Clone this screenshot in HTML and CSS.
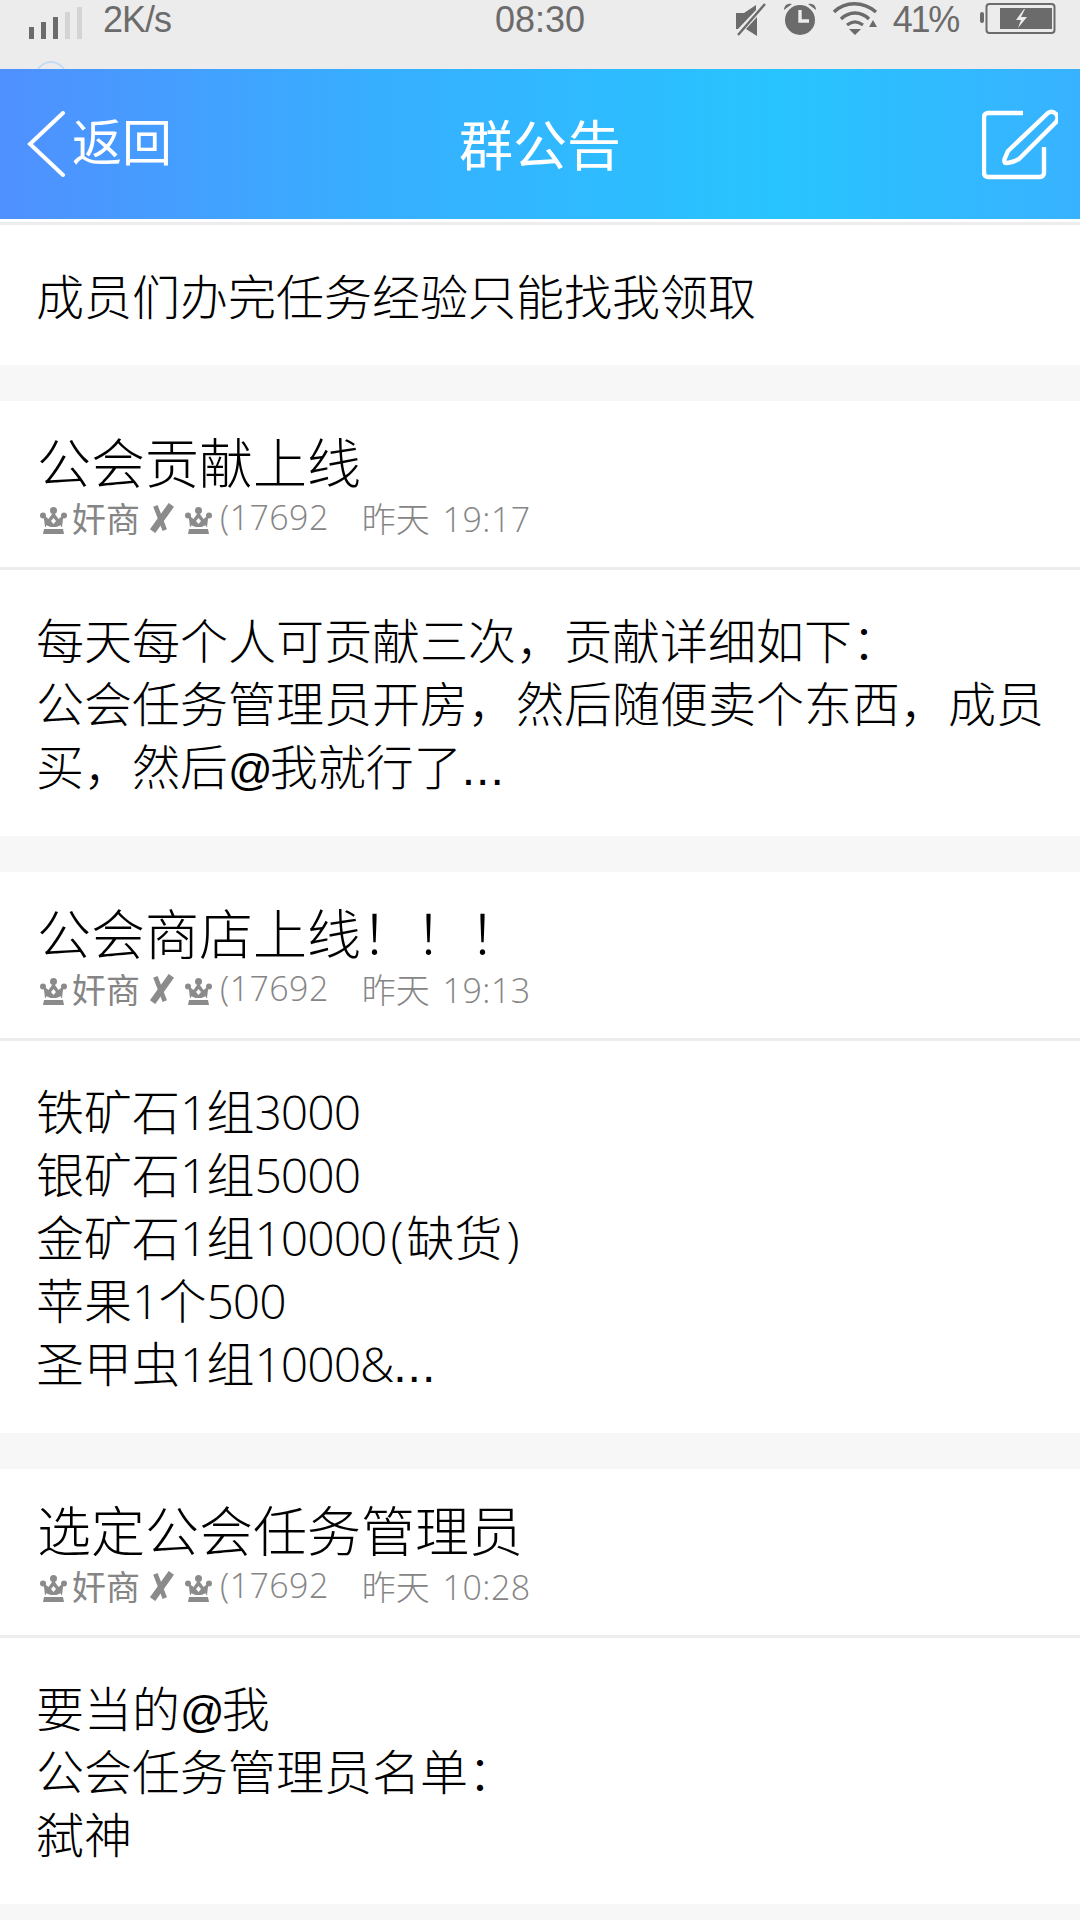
FILE: index.html
```html
<!DOCTYPE html>
<html>
<head>
    <title>群公告</title>
    <link rel="stylesheet" href="styles.css">
</head>
<body>

    <svg class="defs" width="0" height="0">
        <symbol id="crown" viewBox="0 0 27 27">
            <circle cx="13.500" cy="3.500" r="3.500" fill="#8b8b8b"/>
            <circle cx="3" cy="8.500" r="3" fill="#8b8b8b"/>
            <circle cx="24" cy="8.500" r="3" fill="#8b8b8b"/>
            <path d="M13.500 5l5 7 5-4-1.500 12H5L3.500 8l5 4z" fill="#8b8b8b"/>
            <path d="M4 22h19l1 5H3z" fill="#8b8b8b"/>
            <path d="M6 19c5 3 10 3 15 0" stroke="#fff" stroke-width="1.500" fill="none"/>
            <path d="M13.500 11l2.500 3-2.500 3-2.500-3z" fill="#fff"/>
        </symbol>
        <symbol id="cross" viewBox="0 0 27 32">
            <path d="M24 2L4 30" stroke="#8b8b8b" stroke-width="7" fill="none"/>
            <path d="M7 3l10 26" stroke="#8b8b8b" stroke-width="5" fill="none"/>
        </symbol>
    </svg>

    <div class="statusbar">
        <span class="peek"></span>
        <div class="status-left">
            <div class="signal">
                <span class="bar b1"></span>
                <span class="bar b2"></span>
                <span class="bar b3"></span>
                <span class="bar b4 off"></span>
                <span class="bar b5 off"></span>
            </div>
            <span class="speed">2K/s</span>
        </div>
        <div class="clock">08:30</div>
        <div class="status-right">
            <svg class="ic-mute" width="32" height="34" viewBox="0 0 32 34">
                <path d="M1 11h8L21 3v5L3 27H1z M22 15v19l-11-7z" fill="#6b6b6b"/>
                <path d="M3 33L30 2" stroke="#6b6b6b" stroke-width="2.4" fill="none"/>
            </svg>
            <svg class="ic-alarm" width="34" height="34" viewBox="0 0 34 34">
                <circle cx="17" cy="19" r="15" fill="#6b6b6b"/>
                <path d="M1 9a6 6 0 0 1 8-6z M33 9a6 6 0 0 0-8-6z" fill="#6b6b6b"/>
                <path d="M17 9v11h9" stroke="#ececec" stroke-width="3.4" fill="none"/>
            </svg>
            <svg class="ic-wifi" width="46" height="34" viewBox="0 0 46 34">
                <path d="M1 11C12 0 30 0 43 11" stroke="#6b6b6b" stroke-width="3.4" fill="none"/>
                <path d="M8 18C16 10 28 10 36 18" stroke="#6b6b6b" stroke-width="3.4" fill="none"/>
                <path d="M14 24C19 20 25 20 30 24" stroke="#6b6b6b" stroke-width="3.2" fill="none"/>
                <path d="M16 28h12l-6 6z M40 19l4 7h-8z" fill="#6b6b6b"/>
            </svg>
            <span class="percent">41%</span>
            <svg class="ic-battery" width="76" height="34" viewBox="0 0 76 34">
                <rect x="0" y="12" width="4" height="11" rx="2" fill="#6b6b6b"/>
                <rect x="6.500" y="4" width="68" height="29" rx="3" stroke="#6b6b6b" stroke-width="2" fill="none"/>
                <rect x="20" y="8" width="52" height="21" fill="#6b6b6b"/>
                <path d="M44 9l-8 11h5l-3 8 9-11h-6l4-8z" fill="#ececec"/>
            </svg>
        </div>
    </div>

    <div class="header">
        <div class="back">
            <svg width="40" height="66" viewBox="0 0 40 66">
                <path d="M37 2L4 33l33 31" stroke="#fff" stroke-width="4" fill="none" stroke-linecap="round"/>
            </svg>
            <span>返回</span>
        </div>
        <div class="header-title">群公告</div>
        <svg class="edit" width="76" height="74" viewBox="0 0 76 74">
            <path d="M41 4H6a4 4 0 0 0-4 4v56a4 4 0 0 0 4 4h52a4 4 0 0 0 4-4V38" stroke="#fff" stroke-width="4.400" fill="none"/>
            <path d="M26 42l40-38c3-2 6-1 8 1s2 5 0 8L37 50c-4 2-9 4-13 4c-2 0-2-3-1-5z" stroke="#fff" stroke-width="4.400" fill="none"/>
        </svg>
    </div>

    <div class="rule-top"></div>
    <div class="body first">
        成员们办完任务经验只能找我领取
    </div>

    <div class="notice">
        <div class="head">
            <div class="title">公会贡献上线</div>
            <div class="meta">
                <svg class="crown"><use href="#crown"/></svg>
                <span class="name">奸商</span>
                <svg class="cross"><use href="#cross"/></svg>
                <svg class="crown"><use href="#crown"/></svg>
                <span class="uid">(17692</span>
                <span class="when">昨天 <span class="time">19:17</span></span>
            </div>
        </div>
        <div class="body">
            每天每个人可贡献三次，贡献详细如下：<br>
            公会任务管理员开房，然后随便卖个东西，成员<br>
            买，然后<span class="at">@</span>我就行了<span class="dots">...</span>
        </div>
    </div>

    <div class="notice">
        <div class="head">
            <div class="title">公会商店上线！！！</div>
            <div class="meta">
                <svg class="crown"><use href="#crown"/></svg>
                <span class="name">奸商</span>
                <svg class="cross"><use href="#cross"/></svg>
                <svg class="crown"><use href="#crown"/></svg>
                <span class="uid">(17692</span>
                <span class="when">昨天 <span class="time">19:13</span></span>
            </div>
        </div>
        <div class="body">
            铁矿石<span class="n">1</span>组<span class="n">3000</span><br>
            银矿石<span class="n">1</span>组<span class="n">5000</span><br>
            金矿石<span class="n">1</span>组<span class="n">10000</span><span class="n paren">(</span>缺货<span class="n paren">)</span><br>
            苹果<span class="n">1</span>个<span class="n">500</span><br>
            圣甲虫<span class="n">1</span>组<span class="n">1000&amp;</span><span class="dots">...</span>
        </div>
    </div>

    <div class="notice">
        <div class="head">
            <div class="title">选定公会任务管理员</div>
            <div class="meta">
                <svg class="crown"><use href="#crown"/></svg>
                <span class="name">奸商</span>
                <svg class="cross"><use href="#cross"/></svg>
                <svg class="crown"><use href="#crown"/></svg>
                <span class="uid">(17692</span>
                <span class="when">昨天 <span class="time">10:28</span></span>
            </div>
        </div>
        <div class="body">
            要当的<span class="at">@</span>我<br>
            公会任务管理员名单：<br>
            弑神
        </div>
    </div>

</body>
</html>
```

FILE: styles.css
```css
* {
    box-sizing: border-box;
}

html, body {
    margin: 0;
    padding: 0;
}

body {
    width: 1080px;
    height: 1920px;
    overflow: hidden;
    background: #f7f7f7;
    font-family: "Noto Sans CJK SC", sans-serif;
    color: #000;
}

.defs {
    position: absolute;
}

.statusbar {
    display: flex;
    align-items: flex-start;
    justify-content: space-between;
    height: 69px;
    padding: 0 24px 0 29px;
    background: #ececec;
    color: #6b6b6b;
    font-family: "Liberation Sans", sans-serif;
    font-size: 36px;
    position: relative;
    overflow: hidden;
}

/* top of the page scrolled under the header */
.peek {
    position: absolute;
    left: 35px;
    top: 61px;
    width: 32px;
    height: 32px;
    border: 2px solid #c4dcf3;
    border-radius: 50%;
}

.status-left {
    display: flex;
    align-items: center;
    height: 40px;
}

.speed {
    letter-spacing: -1px;
}

.signal {
    display: flex;
    align-items: flex-end;
    gap: 7px;
    height: 32px;
    margin-top: 6px;
    margin-right: 21px;
}

.bar {
    width: 5px;
    background: #6b6b6b;
}

.bar.off { background: #d4d4d4; }
.b1 { height: 12px; }
.b2 { height: 17px; }
.b3 { height: 22px; }
.b4 { height: 27px; }
.b5 { height: 32px; }

.clock {
    position: absolute;
    left: 0;
    right: 0;
    top: 0;
    height: 40px;
    line-height: 40px;
    text-align: center;
}

.status-right {
    display: flex;
    align-items: flex-start;
    height: 40px;
}

.ic-mute { margin-right: 16px; margin-top: 2px; }
.ic-alarm { margin-right: 16px; margin-top: 1px; }
.ic-wifi { margin-right: 14px; margin-top: 1px; }

.percent {
    line-height: 40px;
    margin-right: 22px;
    letter-spacing: -2.250px;
}

.header {
    display: flex;
    align-items: center;
    justify-content: space-between;
    position: relative;
    height: 150px;
    padding: 0 22px 0 26px;
    background: linear-gradient(90deg, #5090ff 0%, #37afff 35%, #28c4ff 72%, #38b2ff 100%);
    color: #fff;
}

.back {
    display: flex;
    align-items: center;
    font-size: 50px;
    gap: 6px;
}

.back span {
    margin-top: -10px;
}

.header-title {
    position: absolute;
    left: 0;
    right: 0;
    top: 34px;
    text-align: center;
    font-size: 54px;
}

.edit {
    margin-top: 4px;
}

.rule-top {
    height: 6px;
    background: #fff;
    border-bottom: 3px solid #ededed;
}

.notice {
    margin-top: 36px;
}

.head {
    height: 169px;
    padding: 30px 37px 0;
    background: #fff;
    border-bottom: 3px solid #ededed;
}

.title {
    font-family: "Lato", "Noto Sans CJK SC", sans-serif;
    font-weight: 300;
    font-size: 54px;
    line-height: 66px;
}

.meta {
    display: flex;
    align-items: center;
    height: 40px;
    font-size: 34px;
    color: #858585;
    font-family: "Open Sans", "Noto Sans CJK SC", sans-serif;
    font-weight: 300;
}

.crown {
    width: 27px;
    height: 27px;
    margin: 6px 0 0 3px;
}

.name {
    margin-left: 5px;
    font-weight: 400;
}

.cross {
    width: 27px;
    height: 30px;
    margin: 2px 7px 0 8px;
}

.uid {
    margin-left: 8px;
    letter-spacing: 0.400px;
}

.when {
    margin-left: 33px;
}

.time {
    margin-left: 4px;
    letter-spacing: 0.500px;
}

.body {
    padding: 39px 20px 38px 36px;
    background: #fff;
    font-family: "Lato", "Noto Sans CJK SC", sans-serif;
    font-weight: 300;
    font-size: 48px;
    line-height: 63px;
}

.body.first {
    height: 140px;
    padding-top: 40px;
}

.n {
    font-family: "Open Sans", sans-serif;
    letter-spacing: -1px;
    line-height: 0;
}

.paren {
    padding: 0 4px;
}

.at {
    font-family: "Liberation Sans", sans-serif;
    font-size: 44px;
    letter-spacing: -3px;
    line-height: 0;
}

.dots {
    font-family: "Liberation Sans", sans-serif;
    letter-spacing: 1px;
    line-height: 0;
}
```
